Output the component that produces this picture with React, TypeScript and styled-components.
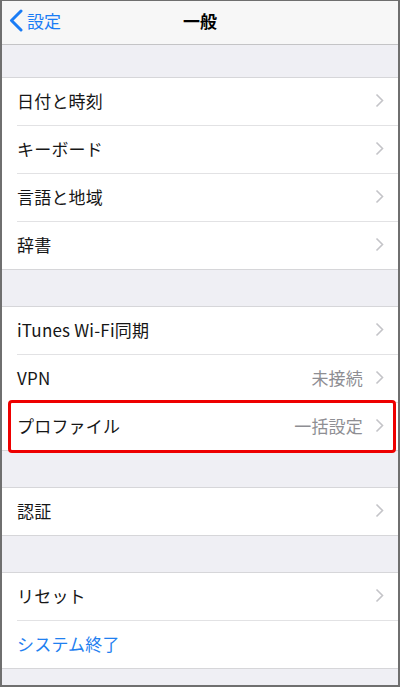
import React from 'react';
import styled, { createGlobalStyle } from 'styled-components';

const GlobalStyle = createGlobalStyle`
  html, body {
    margin: 0;
    padding: 0;
    background: #efeff4;
  }
  body {
    font-family: "Noto Sans CJK JP", "Liberation Sans", sans-serif;
  }
`;

const Frame = styled.div`
  width: 400px;
  height: 687px;
  box-sizing: border-box;
  border: 2px solid #6f6f6f;
  border-top-width: 1px;
  background: #efeff4;
  overflow: hidden;
  display: flex;
  flex-direction: column;
`;

const NavBar = styled.div`
  height: 44px;
  flex-shrink: 0;
  box-sizing: border-box;
  padding-bottom: 4px;
  background: #f7f7f7;
  border-bottom: 1px solid #c4c4c6;
  display: grid;
  grid-template-columns: 1fr auto 1fr;
  align-items: center;
`;

const BackButton = styled.div`
  display: flex;
  align-items: center;
  gap: 4px;
  padding-left: 7px;
  color: #1a7cf5;
  font-size: 17px;
`;

const Title = styled.div`
  font-size: 17px;
  font-weight: 700;
  color: #000;
`;

const Gap = styled.div<{ $h: number }>`
  height: ${(p) => p.$h}px;
  flex-shrink: 0;
`;

const Group = styled.div`
  background: #fff;
  border-top: 1px solid #d6d6d9;
  border-bottom: 1px solid #d6d6d9;
  flex-shrink: 0;
`;

const Row = styled.div<{ $last?: boolean }>`
  position: relative;
  height: ${(p) => (p.$last ? 47 : 48)}px;
  box-sizing: border-box;
  padding-bottom: 3px;
  margin-left: 15px;
  padding-right: 14px;
  display: flex;
  align-items: center;
  border-bottom: ${(p) => (p.$last ? 'none' : '1px solid #e2e2e4')};
`;

const Label = styled.span<{ $blue?: boolean }>`
  flex: 1;
  font-size: 17px;
  color: ${(p) => (p.$blue ? '#1f80f0' : '#161616')};
  letter-spacing: 0.2px;
`;

const Detail = styled.span`
  font-size: 17px;
  color: #8e8e93;
  margin-right: 12px;
  letter-spacing: 0.2px;
`;

const Highlight = styled.div`
  position: absolute;
  top: -3px;
  bottom: -3px;
  left: -9px;
  right: 2px;
  border: 3px solid #ee0000;
  border-radius: 4px;
  pointer-events: none;
`;

const Chevron: React.FC = () => (
  <svg width="9" height="15" viewBox="0 0 9 15">
    <path d="M1.5 1.5 L7.5 7.5 L1.5 13.5" fill="none" stroke="#c4c4c8" strokeWidth="1.6" />
  </svg>
);

const BackChevron: React.FC = () => (
  <svg width="14" height="23" viewBox="0 0 14 23">
    <path d="M12 2 L2.5 11.5 L12 21" fill="none" stroke="#1a7cf5" strokeWidth="3" strokeLinecap="round" strokeLinejoin="round" />
  </svg>
);

const Cell: React.FC<{
  label: string;
  detail?: string;
  last?: boolean;
  blue?: boolean;
  noChevron?: boolean;
  highlighted?: boolean;
}> = ({ label, detail, last, blue, noChevron, highlighted }) => (
  <Row $last={last}>
    <Label $blue={blue}>{label}</Label>
    {detail && <Detail>{detail}</Detail>}
    {!noChevron && <Chevron />}
    {highlighted && <Highlight />}
  </Row>
);

export default function App() {
  return (
    <>
      <GlobalStyle />
      <Frame>
        <NavBar>
          <BackButton>
            <BackChevron />
            <span>設定</span>
          </BackButton>
          <Title>一般</Title>
          <div />
        </NavBar>
        <Gap $h={32} />
        <Group>
          <Cell label="日付と時刻" />
          <Cell label="キーボード" />
          <Cell label="言語と地域" />
          <Cell label="辞書" last />
        </Group>
        <Gap $h={36} />
        <Group>
          <Cell label="iTunes Wi-Fi同期" />
          <Cell label="VPN" detail="未接続" />
          <Cell label="プロファイル" detail="一括設定" last highlighted />
        </Group>
        <Gap $h={36} />
        <Group>
          <Cell label="認証" last />
        </Group>
        <Gap $h={36} />
        <Group>
          <Cell label="リセット" />
          <Cell label="システム終了" blue last noChevron />
        </Group>
      </Frame>
    </>
  );
}
